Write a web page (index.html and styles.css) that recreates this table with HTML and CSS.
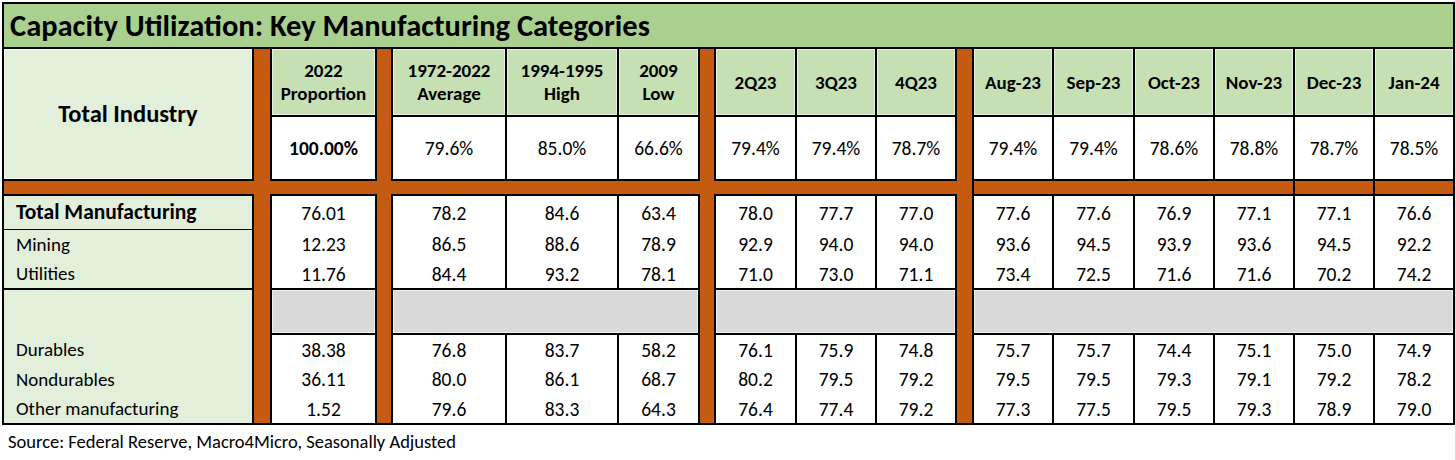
FILE: index.html
```html
<!DOCTYPE html>
<html lang="en">
<head>
<meta charset="utf-8">
<title>Capacity Utilization</title>
<link rel="stylesheet" href="styles.css">
</head>
<body>
<div class="sheet">
<table class="cu">
<colgroup>
<col class="w250"><col class="w18"><col class="w105"><col class="w16">
<col class="w114"><col class="w112"><col class="w81"><col class="w16">
<col class="w81"><col class="w80"><col class="w80"><col class="w17">
<col class="w80"><col class="w81"><col class="w80"><col class="w80"><col class="w80"><col class="w80">
</colgroup>
<tr class="r-title"><td colspan="18" class="title">Capacity Utilization: Key Manufacturing Categories</td></tr>
<tr class="r-head">
<td rowspan="2" class="big">Total Industry</td>
<td rowspan="10" class="bar"></td>
<td class="hd">2022<br>Proportion</td>
<td rowspan="10" class="bar"></td>
<td class="hd">1972-2022<br>Average</td>
<td class="hd">1994-1995<br>High</td>
<td class="hd">2009<br>Low</td>
<td rowspan="10" class="bar"></td>
<td class="hd">2Q23</td>
<td class="hd">3Q23</td>
<td class="hd">4Q23</td>
<td rowspan="10" class="bar"></td>
<td class="hd">Aug-23</td>
<td class="hd">Sep-23</td>
<td class="hd">Oct-23</td>
<td class="hd">Nov-23</td>
<td class="hd">Dec-23</td>
<td class="hd">Jan-24</td>
</tr>
<tr class="r-val">
<td class="val strong">100.00%</td>
<td class="val">79.6%</td><td class="val">85.0%</td><td class="val">66.6%</td>
<td class="val">79.4%</td><td class="val">79.4%</td><td class="val">78.7%</td>
<td class="val">79.4%</td><td class="val">79.4%</td><td class="val">78.6%</td><td class="val">78.8%</td><td class="val">78.7%</td><td class="val">78.5%</td>
</tr>
<tr class="r-stripe">
<td class="stripe edge-l"></td>
<td class="stripe"></td>
<td colspan="3" class="stripe"></td>
<td colspan="3" class="stripe"></td>
<td colspan="4" class="stripe sl"></td>
<td class="stripe sl"></td>
<td class="stripe sl"></td>
</tr>
<tr class="r-tm">
<td class="lab tm">Total Manufacturing</td>
<td class="d t">76.01</td>
<td class="d t">78.2</td><td class="d t">84.6</td><td class="d t">63.4</td>
<td class="d t">78.0</td><td class="d t">77.7</td><td class="d t">77.0</td>
<td class="d t">77.6</td><td class="d t">77.6</td><td class="d t">76.9</td><td class="d t">77.1</td><td class="d t">77.1</td><td class="d t">76.6</td>
</tr>
<tr class="r-row">
<td class="lab">Mining</td>
<td class="d">12.23</td>
<td class="d">86.5</td><td class="d">88.6</td><td class="d">78.9</td>
<td class="d">92.9</td><td class="d">94.0</td><td class="d">94.0</td>
<td class="d">93.6</td><td class="d">94.5</td><td class="d">93.9</td><td class="d">93.6</td><td class="d">94.5</td><td class="d">92.2</td>
</tr>
<tr class="r-row">
<td class="lab b">Utilities</td>
<td class="d b">11.76</td>
<td class="d b">84.4</td><td class="d b">93.2</td><td class="d b">78.1</td>
<td class="d b">71.0</td><td class="d b">73.0</td><td class="d b">71.1</td>
<td class="d b">73.4</td><td class="d b">72.5</td><td class="d b">71.6</td><td class="d b">71.6</td><td class="d b">70.2</td><td class="d b">74.2</td>
</tr>
<tr class="r-gray">
<td class="lab"></td>
<td class="gray"></td>
<td colspan="3" class="gray"></td>
<td colspan="3" class="gray"></td>
<td colspan="6" class="gray"></td>
</tr>
<tr class="r-row">
<td class="lab">Durables</td>
<td class="d t">38.38</td>
<td class="d t">76.8</td><td class="d t">83.7</td><td class="d t">58.2</td>
<td class="d t">76.1</td><td class="d t">75.9</td><td class="d t">74.8</td>
<td class="d t">75.7</td><td class="d t">75.7</td><td class="d t">74.4</td><td class="d t">75.1</td><td class="d t">75.0</td><td class="d t">74.9</td>
</tr>
<tr class="r-row">
<td class="lab">Nondurables</td>
<td class="d">36.11</td>
<td class="d">80.0</td><td class="d">86.1</td><td class="d">68.7</td>
<td class="d">80.2</td><td class="d">79.5</td><td class="d">79.2</td>
<td class="d">79.5</td><td class="d">79.5</td><td class="d">79.3</td><td class="d">79.1</td><td class="d">79.2</td><td class="d">78.2</td>
</tr>
<tr class="r-row">
<td class="lab b">Other manufacturing</td>
<td class="d b">1.52</td>
<td class="d b">79.6</td><td class="d b">83.3</td><td class="d b">64.3</td>
<td class="d b">76.4</td><td class="d b">77.4</td><td class="d b">79.2</td>
<td class="d b">77.3</td><td class="d b">77.5</td><td class="d b">79.5</td><td class="d b">79.3</td><td class="d b">78.9</td><td class="d b">79.0</td>
</tr>
</table>
<p class="source">Source: Federal Reserve, Macro4Micro, Seasonally Adjusted</p>
</div>
</body>
</html>
```
FILE: styles.css
```css
* { box-sizing: border-box; }
html, body { margin: 0; background: #fff; }
body {
  font-family: Carlito, Lato, "Liberation Sans", sans-serif;
  color: #000;
}
.sheet {
  width: 1456px;
  height: 460px;
  padding: 2px 0 0 2px;
  border-right: 1px solid #dcdcdc;
  overflow: hidden;
}
.cu {
  border-collapse: collapse;
  table-layout: fixed;
  width: 1451px;
}
.w250 { width: 250px; }
.w18 { width: 18px; }
.w105 { width: 105px; }
.w16 { width: 16px; }
.w17 { width: 17px; }
.w114 { width: 114px; }
.w112 { width: 112px; }
.w81 { width: 81px; }
.w80 { width: 80px; }

.cu td {
  padding: 0;
  border: 0 none;
  text-align: center;
  vertical-align: middle;
  white-space: nowrap;
}
.r-title { height: 45px; }
.r-head { height: 68px; }
.r-val { height: 64px; }
.r-stripe { height: 15px; }
.r-tm { height: 34px; }
.r-row { height: 30px; }
.r-gray { height: 45px; }

.cu td.title {
  background: #a9d08e;
  border: 2px solid #000;
  text-align: left;
  padding-left: 6px;
  font-weight: 800;
  font-size: 30.5px;
}
.cu td.big {
  background: #e2efda;
  border: 2px solid #000;
  font-weight: 800;
  font-size: 24.5px;
  box-shadow: inset 0 0 0 1px rgba(255,255,255,0.6);
}
.cu td.bar { background: #c55a11; border-bottom: 2px solid #000; }
.cu td.hd {
  background: #c6e0b4;
  border: 2px solid #000;
  font-weight: 700;
  font-size: 19px;
  line-height: 23px;
  box-shadow: inset 0 0 0 1px rgba(255,255,255,0.55);
}
.cu td.val {
  background: #fff;
  border: 2px solid #000;
  font-size: 19.5px;
}
.cu td.val.strong { font-weight: 700; }
.cu td.stripe { background: #c55a11; }
.cu td.stripe.edge-l { border-left: 2px solid #000; }
.cu td.stripe.sl { border-left: 2px solid #000; border-right: 2px solid #000; }

.cu td.lab {
  background: #e2efda;
  border-left: 2px solid #000;
  border-right: 2px solid #000;
  text-align: left;
  padding-left: 12px;
  font-size: 19px;
}
.cu td.lab.tm {
  border-top: 2px solid #000;
  border-bottom: 1px solid #000;
  font-weight: 800;
  font-size: 21.5px;
}
.cu td.lab.b { border-bottom: 2px solid #000; }

.cu td.d {
  background: #fff;
  border-left: 2px solid #000;
  border-right: 2px solid #000;
  font-size: 19.5px;
}
.cu td.d.t { border-top: 2px solid #000; }
.cu td.d.b { border-bottom: 2px solid #000; }

.cu td.gray {
  background: #d9d9d9;
  border: 2px solid #000;
  box-shadow: inset 0 0 0 1px #f0f0f0;
}

.source {
  margin: 0;
  padding: 5px 0 0 6px;
  font-size: 18.5px;
  line-height: 24px;
}
```
